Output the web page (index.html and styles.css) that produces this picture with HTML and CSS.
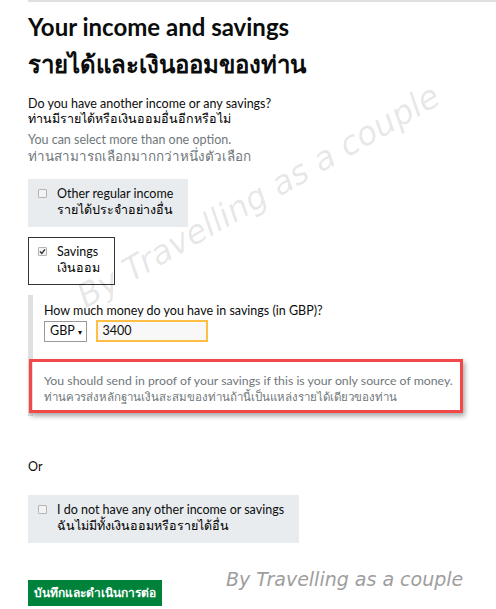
FILE: index.html
```html
<!DOCTYPE html>
<html lang="th">
<head>
    <meta charset="UTF-8">
    <meta name="viewport" content="width=device-width, initial-scale=1.0">
    <title>Your income and savings</title>
    <link rel="stylesheet" href="styles.css">
</head>
<body>

<div class="page">
    <h1 class="heading">Your income and savings<br>รายได้และเงินออมของท่าน</h1>

    <!-- Question -->
    <p class="question">Do you have another income or any savings?<br><span class="th">ท่านมีรายได้หรือเงินออมอื่นอีกหรือไม่</span></p>
    <p class="hint">You can select more than one option.<br><span class="hint-th">ท่านสามารถเลือกมากกว่าหนึ่งตัวเลือก</span></p>

    <label class="option">
        <span class="box"></span>
        <span>Other regular income<br><span class="th">รายได้ประจำอย่างอื่น</span></span>
    </label>

    <label class="option selected">
        <span class="box">
            <svg width="7" height="7" viewBox="0 0 7 7"><path d="M1 3.6 L2.8 5.4 L6 1.4" fill="none" stroke="#333" stroke-width="1.4"/></svg>
        </span>
        <span>Savings<br><span class="th">เงินออม</span></span>
    </label>

    <!-- Savings details -->
    <div class="panel">
        <p class="panel-label">How much money do you have in savings (in GBP)?</p>
        <div class="amount-row">
            <div class="currency">GBP <span class="arrow">&#9662;</span></div>
            <div class="amount">3400</div>
        </div>
        <div class="note">
            <p>You should send in proof of your savings if this is your only source of money.<br><span class="note-th">ท่านควรส่งหลักฐานเงินสะสมของท่านถ้านี้เป็นแหล่งรายได้เดียวของท่าน</span></p>
        </div>
    </div>

    <p class="or">Or</p>

    <label class="option">
        <span class="box"></span>
        <span>I do not have any other income or savings<br><span class="th">ฉันไม่มีทั้งเงินออมหรือรายได้อื่น</span></span>
    </label>

    <div class="actions">
        <button class="btn">บันทึกและดำเนินการต่อ</button>
        <span class="credit">By Travelling as a couple</span>
    </div>
</div>

<!-- ลายน้ำ -->
<div class="watermark">By Travelling as a couple</div>

</body>
</html>
```

FILE: styles.css
```css
body {
    margin: 0;
    font-family: Lato, "Noto Sans", "Liberation Sans", sans-serif;
    color: #0b0c0c;
    overflow: hidden;
}

.page {
    margin-left: 28px;
    border-top: 2px solid #dee0e2;
    padding-top: 6px;
}

.heading {
    font-size: 24px;
    line-height: 37px;
    font-weight: 700;
    margin: 0 0 14px 0;
}

.question {
    font-size: 12.5px;
    line-height: 15px;
    margin: 0 0 6px 0;
}

.th {
    color: #000;
}

.hint {
    font-size: 12.5px;
    line-height: 16px;
    color: #6f777b;
    margin: 0 0 14px 0;
}

.hint-th {
    font-size: 13.4px;
}

.option {
    display: flex;
    align-items: flex-start;
    width: fit-content;
    background: #e9ecef;
    padding: 6px 14px 8px 9px;
    margin-bottom: 10px;
    font-size: 12.5px;
    line-height: 16px;
    border: 1px solid transparent;
}

.box {
    width: 7px;
    height: 7px;
    border: 1px solid #b5b5b5;
    border-radius: 1px;
    background: #f3f3f3;
    margin: 3px 10px 0 0;
    flex-shrink: 0;
    display: flex;
}

.option.selected {
    background: #fff;
    border-color: #333;
}

.panel {
    border-left: 5px solid #dee0e2;
    margin-top: 6px;
    padding: 8px 0 5px 11px;
}

.panel-label {
    font-size: 12.5px;
    line-height: 16px;
    margin: 0 0 1px 0;
}

.amount-row {
    display: flex;
    align-items: flex-end;
    gap: 9px;
}

.currency {
    border: 1px solid #999;
    font-size: 12.5px;
    line-height: 16px;
    padding: 1px 4px 1px 5px;
}

.arrow {
    font-size: 8px;
}

.amount {
    width: 98px;
    border: 2px solid #ffbf47;
    background: #f8f8f8;
    font-size: 12.5px;
    line-height: 16px;
    padding: 1px 5px 1px 5px;
}

.note {
    position: relative;
    margin-top: 17px;
    padding: 14px 0 6px 0;
}

/* กรอบสีแดงที่ผู้ถ่ายภาพขีดไว้ */
.note::after {
    content: "";
    position: absolute;
    left: -15px;
    top: 0;
    width: 428px;
    height: 48px;
    border: 3px solid #f24848;
    box-shadow: 2px 3px 5px rgba(0, 0, 0, 0.35);
}

.note p {
    font-size: 12.3px;
    line-height: 16px;
    color: #6f777b;
    margin: 0;
}

.note-th {
    font-size: 11.5px;
}

.or {
    font-size: 12.5px;
    margin: 43px 0 21px 0;
}

.actions {
    display: flex;
    align-items: flex-end;
    margin-top: 25px;
}

.btn {
    background: #00823b;
    color: #fff;
    border: none;
    box-shadow: 0 2px 0 #003618;
    font-family: inherit;
    font-size: 12px;
    font-weight: 700;
    padding: 3px 6px 4px 6px;
}

.credit {
    margin-left: 64px;
    margin-bottom: 16px;
    font-family: "DejaVu Sans", sans-serif;
    font-style: italic;
    font-size: 19px;
    color: #9e9e9e;
}

.watermark {
    position: absolute;
    left: 70px;
    top: 282px;
    transform: rotate(-30deg);
    transform-origin: left top;
    font-family: "DejaVu Sans", sans-serif;
    font-style: italic;
    font-size: 33px;
    color: rgba(0, 0, 0, 0.1);
    white-space: nowrap;
    pointer-events: none;
}
```
